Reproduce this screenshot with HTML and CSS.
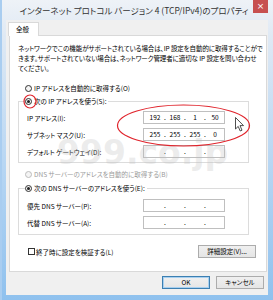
FILE: index.html
```html
<!DOCTYPE html>
<html lang="ja">

<head>
    <meta charset="UTF-8">
    <title>インターネット プロトコル バージョン 4 (TCP/IPv4)のプロパティ</title>
    <link rel="stylesheet" href="styles.css">
</head>

<body>
    <div class="window">
        <div class="titlebar">
            <span></span>
            <span class="title">インターネット プロトコル バージョン 4 (TCP/IPv4)のプロパティ</span>
            <span class="close">×</span>
        </div>

        <div class="client">
            <div class="tabs">
                <div class="tab">全般</div>
            </div>

            <div class="panel">
                <p class="intro">ネットワークでこの機能がサポートされている場合は、IP 設定を自動的に取得することがで<br>きます。サポートされていない場合は、ネットワーク管理者に適切な IP 設定を問い合わせ<br>てください。</p>

                <div class="choice first">
                    <span class="radio"></span>
                    <span>IP アドレスを自動的に取得する(O)</span>
                </div>

                <fieldset class="group ip-group">
                    <legend class="choice">
                        <span class="radio on"></span>
                        <span>次の IP アドレスを使う(S):</span>
                    </legend>
                    <div class="row">
                        <span class="label">IP アドレス(I):</span>
                        <div class="ipbox">
                            <span class="field">192</span><span class="dot">.</span><span class="field">168</span><span class="dot">.</span><span class="field">1</span><span class="dot">.</span><span class="field">50</span>
                        </div>
                    </div>
                    <div class="row">
                        <span class="label">サブネット マスク(U):</span>
                        <div class="ipbox">
                            <span class="field">255</span><span class="dot">.</span><span class="field">255</span><span class="dot">.</span><span class="field">255</span><span class="dot">.</span><span class="field">0</span>
                        </div>
                    </div>
                    <div class="row">
                        <span class="label">デフォルト ゲートウェイ(D):</span>
                        <div class="ipbox">
                            <span class="field"></span><span class="dot">.</span><span class="field"></span><span class="dot">.</span><span class="field"></span><span class="dot">.</span><span class="field"></span>
                        </div>
                    </div>
                </fieldset>

                <div class="choice disabled dns-auto">
                    <span class="radio"></span>
                    <span>DNS サーバーのアドレスを自動的に取得する(B)</span>
                </div>

                <fieldset class="group dns-group">
                    <legend class="choice">
                        <span class="radio on"></span>
                        <span>次の DNS サーバーのアドレスを使う(E):</span>
                    </legend>
                    <div class="row">
                        <span class="label">優先 DNS サーバー(P):</span>
                        <div class="ipbox">
                            <span class="field"></span><span class="dot">.</span><span class="field"></span><span class="dot">.</span><span class="field"></span><span class="dot">.</span><span class="field"></span>
                        </div>
                    </div>
                    <div class="row">
                        <span class="label">代替 DNS サーバー(A):</span>
                        <div class="ipbox">
                            <span class="field"></span><span class="dot">.</span><span class="field"></span><span class="dot">.</span><span class="field"></span><span class="dot">.</span><span class="field"></span>
                        </div>
                    </div>
                </fieldset>

                <div class="panel-foot">
                    <div class="check">
                        <span class="box"></span>
                        <span>終了時に設定を検証する(L)</span>
                    </div>
                    <button class="btn advanced">詳細設定(V)...</button>
                </div>
            </div>

            <div class="actions">
                <button class="btn default">OK</button>
                <button class="btn">キャンセル</button>
            </div>
        </div>

        <!-- watermark and the red marks drawn over the screenshot -->
        <div class="watermark">999.co.jp</div>
        <svg class="marks" width="273" height="300" viewBox="0 0 273 300">
            <ellipse cx="28" cy="101.5" rx="6" ry="6.5" fill="none" stroke="#e0242c" stroke-width="1.2"/>
            <ellipse cx="181.5" cy="125.5" rx="66" ry="20.5" fill="none" stroke="#e0242c" stroke-width="1.2"/>
            <path d="M233.5 117.5 L233.5 129 L236.2 126.4 L238.2 131 L240 130.2 L238 125.6 L241.5 125.6 Z" fill="#fff" stroke="#222" stroke-width="0.8" stroke-linejoin="round"/>
        </svg>
    </div>
</body>

</html>
```

FILE: styles.css
```css
* {
    box-sizing: border-box;
}

body {
    margin: 0;
    font-family: "Noto Sans CJK JP", "Noto Sans", sans-serif;
    font-feature-settings: "palt";
    font-size: 6.5px;
    line-height: 10px;
    color: #000;
}

.window {
    position: relative;
    width: 273px;
    height: 300px;
    display: flex;
    flex-direction: column;
    background: linear-gradient(to bottom, #eef2f7 0, #dfe9f4 12%, #b7d6f3 55%, #8fc1ee 100%);
    border-left: 2px solid #a9cdf0;
    overflow: hidden;
}

.titlebar {
    height: 20px;
    display: grid;
    grid-template-columns: 1fr auto 1fr;
    padding-right: 5px;
}

.title {
    font-size: 8.5px;
    line-height: 20px;
    color: #333;
    white-space: nowrap;
    padding-right: 2px;
}

.close {
    justify-self: end;
    width: 15px;
    height: 13px;
    background: #c75050;
    color: #fff;
    font-family: "DejaVu Sans", sans-serif;
    font-size: 9px;
    line-height: 12px;
    text-align: center;
}

.client {
    flex: 1;
    margin: 0 5px 5px 4px;
    padding: 2px 1px 6px 3px;
    background: #f0f0f0;
    display: flex;
    flex-direction: column;
}

.tabs {
    display: flex;
    margin-left: -1px;
}

.tab {
    width: 31px;
    height: 14px;
    margin-bottom: -1px;
    padding-left: 7px;
    background: #fff;
    border: 1px solid #d9d9d9;
    border-bottom: none;
    line-height: 12px;
    position: relative;
    z-index: 1;
}

.panel {
    background: #fff;
    border: 1px solid #d9d9d9;
    height: 237px;
}

.intro {
    margin: 7px 0 0 8px;
    white-space: nowrap;
    letter-spacing: -0.1px;
}

.choice {
    display: flex;
    align-items: center;
    gap: 2px;
    white-space: nowrap;
}

.choice.first {
    margin: 10px 0 0 15px;
}

.radio {
    width: 7px;
    height: 7px;
    border: 1px solid #333;
    border-radius: 50%;
    background: #f4f4f4;
    display: flex;
    align-items: center;
    justify-content: center;
}

.radio.on::after {
    content: "";
    width: 3px;
    height: 3px;
    border-radius: 50%;
    background: #222;
}

.disabled {
    color: #9a9a9a;
}

.disabled .radio {
    border-color: #bcbcbc;
}

.group {
    margin: 3px 0 0 8px;
    width: 231px;
    border: 1px solid #dcdcdc;
    padding: 0 0 4px 8px;
}

.group legend {
    padding: 0 2px 0 0;
    margin-left: -2px;
    background: #fff;
}

.dns-group {
    margin-top: 4px;
    padding-bottom: 5px;
}

.row {
    display: flex;
    align-items: center;
    height: 13px;
    margin-top: 4px;
}

.ip-group .row:first-of-type {
    margin-top: 5px;
}

.dns-group .row:first-of-type {
    margin-top: 6px;
}

.label {
    width: 116px;
    white-space: nowrap;
}

.ipbox {
    width: 82px;
    height: 13px;
    border: 1px solid #bfbfbf;
    display: flex;
    padding-left: 2px;
    line-height: 11px;
}

.field {
    width: 18px;
    text-align: center;
}

.dot {
    width: 2px;
    text-align: center;
}

.dns-auto {
    margin: 6px 0 0 15px;
}

.panel-foot {
    display: flex;
    align-items: center;
    justify-content: space-between;
    margin: 10px 10px 0 18px;
}

.check {
    display: flex;
    align-items: center;
    gap: 1px;
}

.box {
    width: 7px;
    height: 7px;
    border: 1px solid #333;
    background: #fff;
}

.btn {
    height: 13px;
    padding: 0;
    font: inherit;
    line-height: 11px;
    color: #000;
    background: linear-gradient(#f0f0f0, #e5e5e5);
    border: 1px solid #acacac;
}

.advanced {
    width: 58px;
}

.actions {
    display: flex;
    justify-content: flex-end;
    gap: 6px;
    margin: 4px 3px 0 0;
}

.actions .btn {
    width: 48px;
}

.btn.default {
    border-color: #3c7fb1;
    box-shadow: inset 0 0 0 1px #a8d0f0;
}

.watermark {
    position: absolute;
    left: 55px;
    top: 133px;
    font-family: "DejaVu Sans", sans-serif;
    font-weight: bold;
    font-size: 33px;
    line-height: 40px;
    color: rgba(190, 190, 190, 0.28);
    pointer-events: none;
}

.marks {
    position: absolute;
    left: 0;
    top: 0;
}
```
